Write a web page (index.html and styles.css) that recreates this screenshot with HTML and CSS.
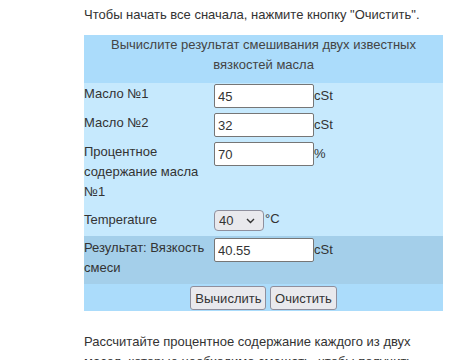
FILE: index.html
```html
<!DOCTYPE html>
<html lang="ru">
<head>
    <meta charset="UTF-8">
    <meta name="viewport" content="width=device-width, initial-scale=1.0">
    <title>Вязкость смеси масел</title>
    <link rel="stylesheet" href="styles.css">
</head>
<body>
    <div class="page">
        <p class="intro">Чтобы начать все сначала, нажмите кнопку "Очистить".</p>

        <table class="calc">
            <colgroup>
                <col class="col-label">
                <col class="col-field">
                <col class="col-unit">
            </colgroup>
            <tr class="head">
                <td colspan="3">Вычислите результат смешивания двух известных вязкостей масла</td>
            </tr>
            <tr class="row">
                <td class="label">Масло №1</td>
                <td><input class="field" type="text" value="45"></td>
                <td class="unit">cSt</td>
            </tr>
            <tr class="row">
                <td class="label">Масло №2</td>
                <td><input class="field" type="text" value="32"></td>
                <td class="unit">cSt</td>
            </tr>
            <tr class="row tall">
                <td class="label">Процентное содержание масла №1</td>
                <td><input class="field" type="text" value="70"></td>
                <td class="unit">%</td>
            </tr>
            <tr class="row temp">
                <td class="label">Temperature</td>
                <td colspan="2" class="unit">
                    <span class="select-wrap">
                        <select class="temp-select">
                            <option>40</option>
                            <option>100</option>
                        </select>
                        <svg class="chevron" width="9" height="6" viewBox="0 0 9 6"><path d="M1 1l3.5 3.5L8 1" fill="none" stroke="#333" stroke-width="1.4"/></svg>
                    </span>°C
                </td>
            </tr>
            <tr class="row result">
                <td class="label">Результат: Вязкость смеси</td>
                <td><input class="field" type="text" value="40.55"></td>
                <td class="unit">cSt</td>
            </tr>
            <tr class="buttons">
                <td colspan="3">
                    <button class="btn">Вычислить</button>
                    <button class="btn">Очистить</button>
                </td>
            </tr>
        </table>

        <p class="outro">Рассчитайте процентное содержание каждого из двух масел, которые необходимо смешать, чтобы получить нужную вязкость.</p>
    </div>
</body>
</html>
```

FILE: styles.css
```css
body {
  font-family: "Liberation Sans", Arial, sans-serif;
  font-size: 13px;
  line-height: 20px;
  color: #333;
  margin: 0;
  padding: 0;
  background-color: #fff;
}

.page {
  width: 359px;
  margin-left: 84px;
}

.intro {
  margin: 5px 0 10px;
}

.calc {
  width: 359px;
  border-collapse: collapse;
  border-spacing: 0;
  table-layout: fixed;
}

.col-label {
  width: 130px;
}

.col-field {
  width: 100px;
}

.calc td {
  padding: 0;
}

.head td {
  background-color: #abdcfb;
  color: #444;
  text-align: center;
  padding: 0 0 8px;
}

.row td {
  background-color: #c6e9fd;
  vertical-align: top;
  padding-top: 1px;
}

.row {
  height: 29px;
}

.row.tall {
  height: 62px;
}

.row.temp {
  height: 33px;
}

.row.temp td {
  vertical-align: middle;
  padding-top: 0;
}

.row.result {
  height: 48px;
}

.row.result td {
  background-color: #a4cfea;
  padding-top: 2px;
}

.label {
  padding-left: 1px;
}

.row td.unit {
  padding-top: 3px;
}

.row.temp td.unit {
  padding-top: 1px;
}

.row.result td.unit {
  padding-top: 4px;
}

.field {
  box-sizing: border-box;
  width: 100px;
  height: 24px;
  margin: 0;
  padding: 0 3px;
  border: 1px solid #767676;
  border-radius: 2px;
  font-family: "Liberation Sans", Arial, sans-serif;
  font-size: 13px;
  color: #333;
  background-color: #fff;
  vertical-align: top;
}

.select-wrap {
  position: relative;
  display: inline-block;
  vertical-align: middle;
  margin-right: 1px;
}

.temp-select {
  appearance: none;
  -webkit-appearance: none;
  display: block;
  box-sizing: border-box;
  width: 50px;
  height: 21px;
  margin: 0;
  padding: 0 0 0 4px;
  border: 1px solid #8f8f9d;
  border-radius: 4px;
  background-color: #e9e9ed;
  font-family: "Liberation Sans", Arial, sans-serif;
  font-size: 13px;
  color: #333;
}

.chevron {
  position: absolute;
  right: 9px;
  top: 8px;
  pointer-events: none;
}

.buttons {
  height: 27px;
}

.buttons td {
  background-color: #abdcfb;
  text-align: center;
  padding-top: 2px;
  vertical-align: top;
}

.btn {
  box-sizing: border-box;
  height: 24px;
  padding: 0 4px;
  border: 1px solid #8f8f9d;
  border-radius: 3px;
  background-color: #e9e9ed;
  font-family: "Liberation Sans", Arial, sans-serif;
  font-size: 13px;
  color: #333;
  cursor: pointer;
}

.outro {
  margin: 21px 0 0;
}
```
